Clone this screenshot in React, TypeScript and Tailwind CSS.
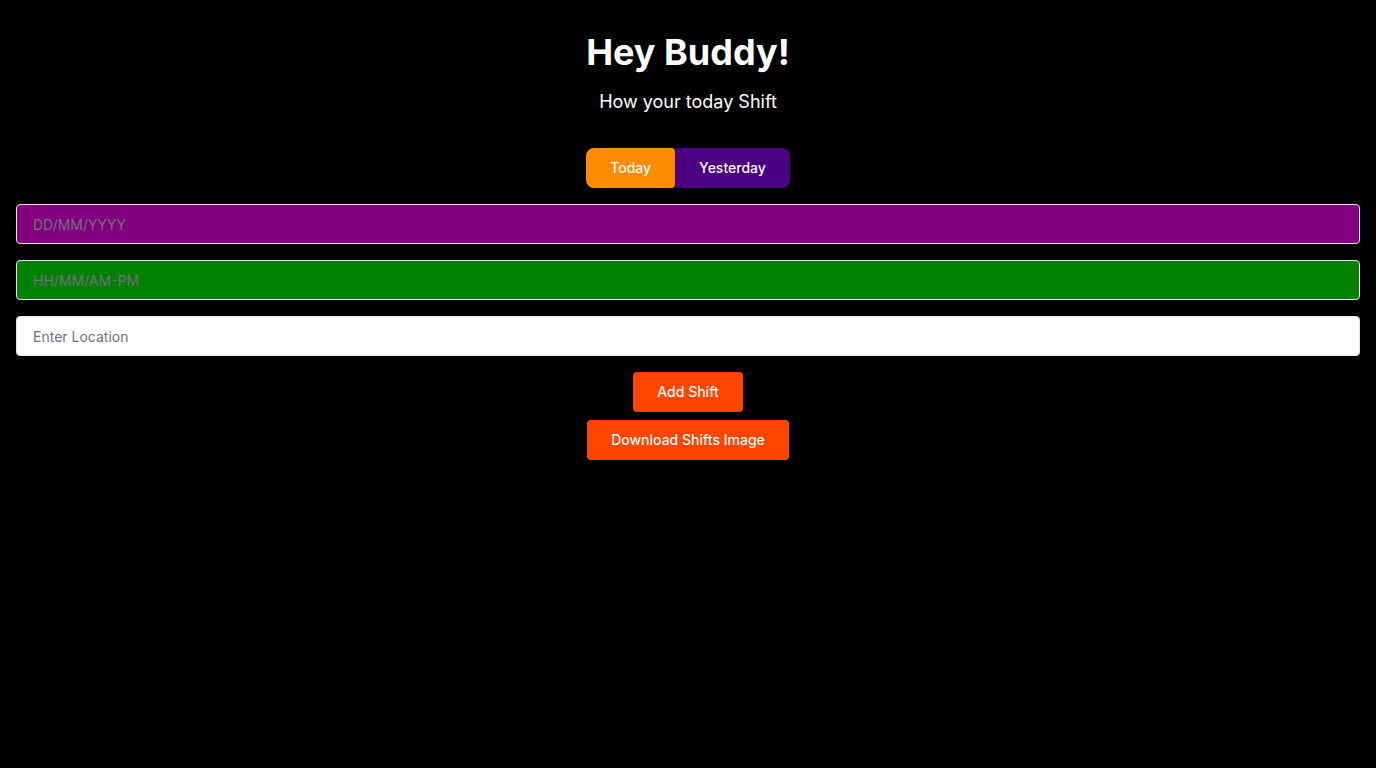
import { useState } from "react";

const buttonClass = "h-10 px-6 text-sm font-medium text-zinc-50";
const inputClass =
  "h-10 w-full rounded-sm border border-zinc-200 px-4 text-sm placeholder:text-[#71717a]";

export default function App() {
  const [date, setDate] = useState("");
  const [time, setTime] = useState("");
  const [location, setLocation] = useState("");

  return (
    <main className="flex min-h-screen flex-col items-center bg-black px-4 pt-8 font-['Inter',sans-serif] text-white">
      <h1 className="text-4xl font-bold">Hey Buddy!</h1>
      <p className="mt-4 text-lg">How your today Shift</p>

      <div className="mt-8 flex">
        <button type="button" className={`${buttonClass} rounded-l-lg rounded-r-sm bg-[#ff8c00]`}>
          Today
        </button>
        <button type="button" className={`${buttonClass} rounded-l-sm rounded-r-lg bg-[#4b0082]`}>
          Yesterday
        </button>
      </div>

      <form className="mt-4 flex w-full flex-col items-center" onSubmit={(e) => e.preventDefault()}>
        <div className="flex w-full flex-col gap-4">
          <input
            type="text"
            aria-label="Date"
            placeholder="DD/MM/YYYY"
            value={date}
            onChange={(e) => setDate(e.target.value)}
            className={`${inputClass} bg-[#800080]`}
          />
          <input
            type="text"
            aria-label="Time"
            placeholder="HH/MM/AM-PM"
            value={time}
            onChange={(e) => setTime(e.target.value)}
            className={`${inputClass} bg-[#008000]`}
          />
          <input
            type="text"
            aria-label="Location"
            placeholder="Enter Location"
            value={location}
            onChange={(e) => setLocation(e.target.value)}
            className={`${inputClass} bg-white text-black`}
          />
        </div>
        <button type="submit" className={`${buttonClass} mt-4 rounded-sm bg-[#ff4500]`}>
          Add Shift
        </button>
        <button type="button" className={`${buttonClass} mt-2 rounded-sm bg-[#ff4500]`}>
          Download Shifts Image
        </button>
      </form>
    </main>
  );
}
